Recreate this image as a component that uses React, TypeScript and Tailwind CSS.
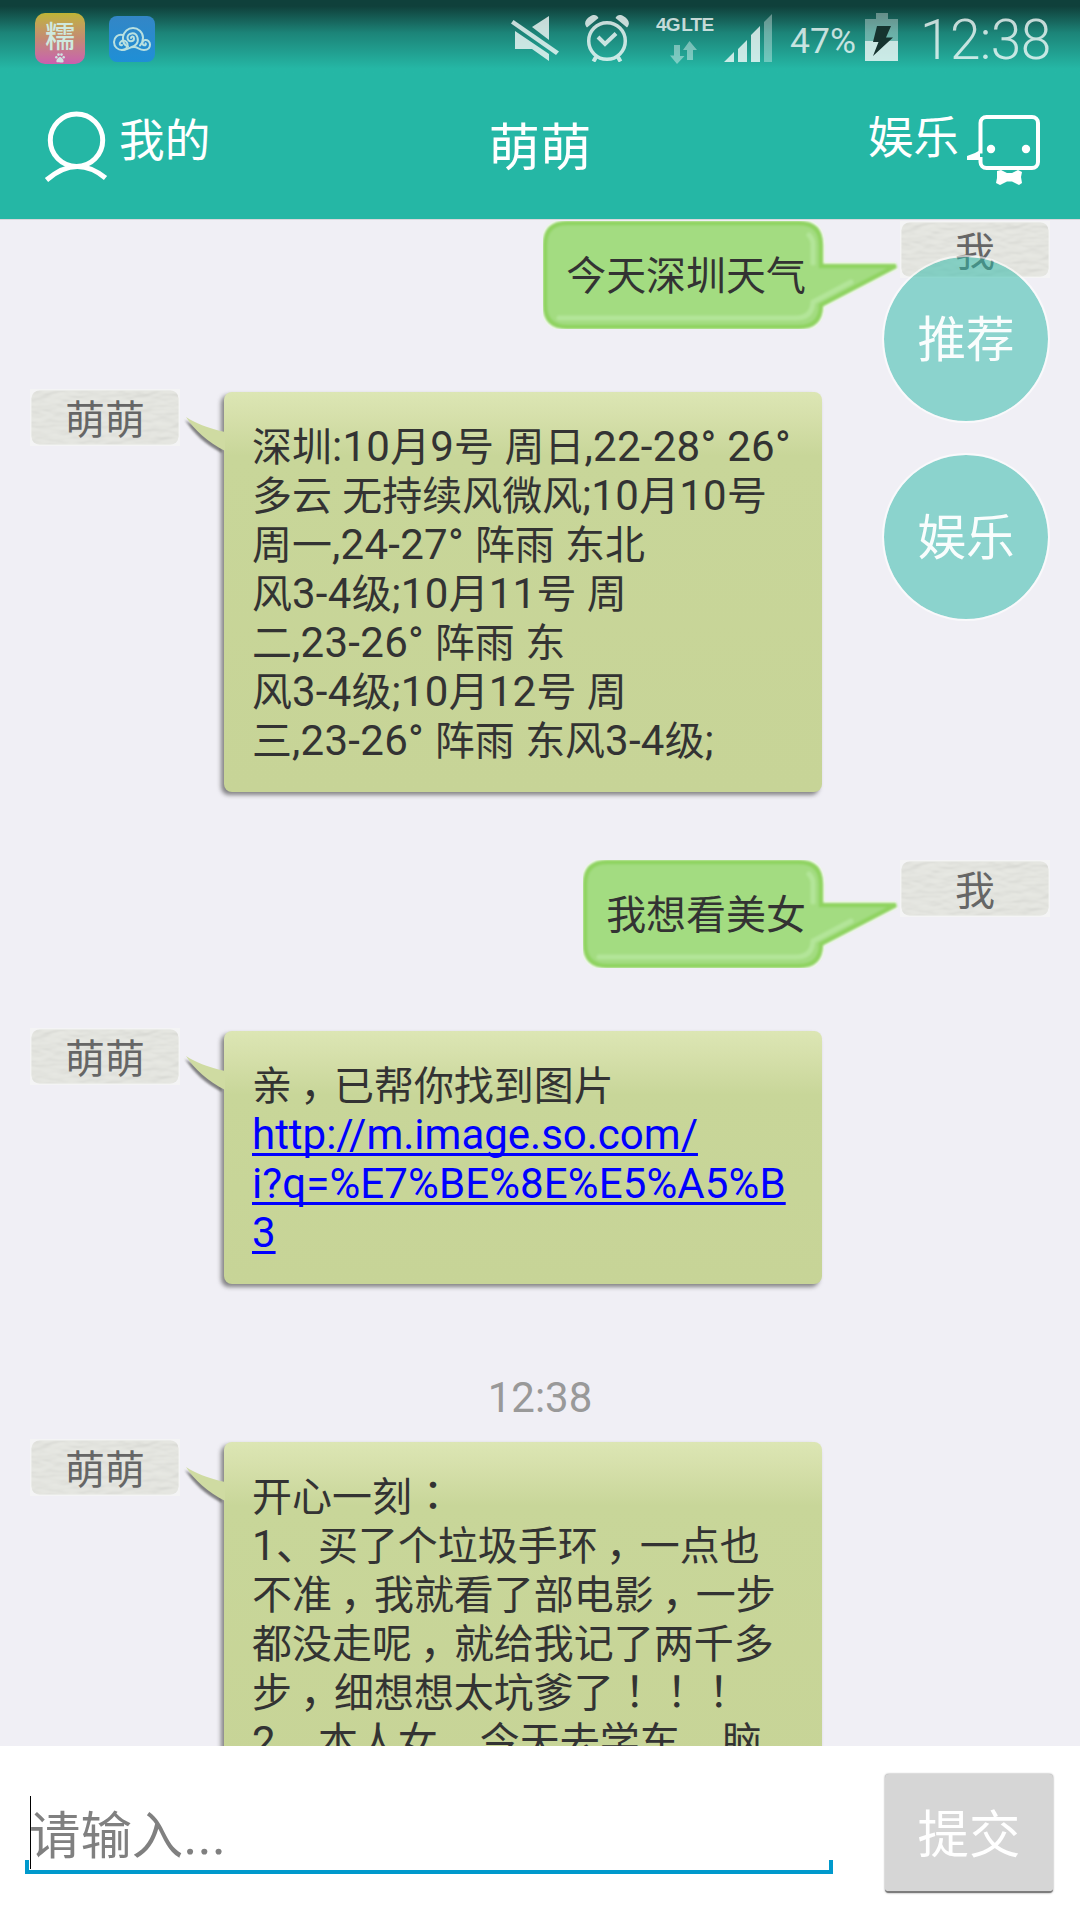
import type { ReactNode } from "react";

interface Message {
  from: "me" | "bot";
  lines: { text: string; link?: boolean }[];
  time?: string;
}

const MESSAGES: Message[] = [
  { from: "me", lines: [{ text: "今天深圳天气" }] },
  {
    from: "bot",
    lines: [
      { text: "深圳:10月9号 周日,22-28° 26°" },
      { text: "多云 无持续风微风;10月10号" },
      { text: "周一,24-27° 阵雨 东北" },
      { text: "风3-4级;10月11号 周" },
      { text: "二,23-26° 阵雨 东" },
      { text: "风3-4级;10月12号 周" },
      { text: "三,23-26° 阵雨 东风3-4级;" },
    ],
  },
  { from: "me", lines: [{ text: "我想看美女" }] },
  {
    from: "bot",
    lines: [
      { text: "亲，已帮你找到图片" },
      { text: "http://m.image.so.com/", link: true },
      { text: "i?q=%E7%BE%8E%E5%A5%B", link: true },
      { text: "3", link: true },
    ],
  },
  {
    from: "bot",
    time: "12:38",
    lines: [
      { text: "开心一刻：" },
      { text: "1、买了个垃圾手环，一点也" },
      { text: "不准，我就看了部电影，一步" },
      { text: "都没走呢，就给我记了两千多" },
      { text: "步，细想想太坑爹了！！！" },
      { text: "2、本人女，今天去学车，脑" },
    ],
  },
];

// Han glyphs are set a little smaller than the Latin ones, full-width marks keep the full em
function Txt({ children }: { children: string }) {
  const parts = children.match(/[\u4e00-\u9fff]+|，|[、：！]|[^\u4e00-\u9fff，、：！]+/g) ?? [];
  return (
    <>
      {parts.map((p, i) => {
        if (/[\u4e00-\u9fff]/.test(p)) {
          return <span key={i} className="text-[0.952em] leading-none">{p}</span>;
        }
        if (p === "，") {
          return (
            <span key={i} className="pl-[0.19em] pr-[0.31em] font-['Roboto','Noto_Sans_CJK_JP',sans-serif] leading-none [font-feature-settings:'halt']">
              {p}
            </span>
          );
        }
        if (/[、：！]/.test(p)) {
          return <span key={i} className="font-['Roboto','Noto_Sans_CJK_JP',sans-serif] leading-none">{p}</span>;
        }
        return <span key={i} className={/\d/.test(p) ? "tracking-[0.3px]" : ""}>{p}</span>;
      })}
    </>
  );
}

function StatusBar() {
  return (
    <div className="flex h-[78px] bg-linear-to-b from-[#0f403b] from-8% via-[#1c8478] via-42% to-[#25b7a5] to-88% pl-[35px]">
      <div className="mt-[13px] flex h-[51px] w-[50px] flex-col items-center rounded-[10px] bg-linear-to-b from-[#bfb433] via-[#c48a72] to-[#c95fae] font-['Noto_Sans_CJK_SC',sans-serif] text-[30px] font-medium leading-[42px] text-[#cfe9df]">
        糯
        <svg className="-mt-[2px] h-[10px] w-[10px]" viewBox="0 0 10 10" fill="#cfe3e2">
          <circle cx="1.3" cy="4.2" r="1.2" />
          <circle cx="3.5" cy="1.6" r="1.3" />
          <circle cx="6.5" cy="1.6" r="1.3" />
          <circle cx="8.7" cy="4.2" r="1.2" />
          <path d="M5 4c1.5 0 3.6 2.500 3.600 4.200S7 9.700 5 9.400 1.400 9.900 1.400 8.200 3.500 4 5 4z" />
        </svg>
      </div>
      <svg className="ml-6 mt-4 h-[46px] w-[46px]" viewBox="109 16 46 46" fill="none">
        <defs>
          <linearGradient id="cloudBg" x1="0" y1="0" x2="0" y2="1">
            <stop offset="0" stopColor="#3386c6" />
            <stop offset="1" stopColor="#1f8fd6" />
          </linearGradient>
        </defs>
        <rect x="109" y="16" width="46" height="46" rx="8" fill="url(#cloudBg)" />
        <g stroke="#b9e0e0" strokeWidth="2" strokeLinecap="round">
          <path d="M131 38c0-2 3-2 3 .5 0 3.500-6 4-6.500-.5-.4-5 8-7 10-.5 1.500 5-2 9-6 9.500" />
          <path d="M128 46.500c-4-1.500-5.500-5.500-5-9.500.8-5.500 5-9 10-9s10 4 10 9.500c0 3.500-1 6-3 8" />
          <path d="M123 35c-5-1.500-9 2.500-9 7 0 5 4 8 8 8s6-3 5.500-6-4-4.500-6.500-2.500-1 4.500 1 3.500" />
          <path d="M122 50c5 0 7-3 12-3 4 0 5 3 10 3 4 0 6-2.500 6-5.500s-2.500-5-5-4.500-3.500 4-1.500 5 3-1 2-1.700" />
        </g>
      </svg>

      <svg className="ml-[356px] mt-[15px] h-[48px] w-[48px]" viewBox="511 15 48 48" fill="#fff" fillOpacity=".76">
        <path d="M532 27L549 16V40Z" />
        <path d="M515 31L549 54V61L532 49H515Z" />
        <path d="M513.500 20L559 51.500 556 55 511 23.500Z" />
      </svg>
      <svg className="ml-[25px] mt-[14px] h-[48px] w-[46px]" viewBox="584 14 46 48" fill="none" stroke="#fff" opacity=".76">
        <circle cx="607" cy="41" r="18.300" strokeWidth="3.500" />
        <path d="M598 37l7 7 11-10.500" strokeWidth="4" />
        <path d="M596 57l-2.500 4.500M618 57l2.500 4.500" strokeWidth="4" />
        <path d="M587 27.500C583 23 586 19 590 16.500S597 15 598.500 18ZM627 27.500C631 23 628 19 624 16.500S617 15 615.500 18Z" fill="#fff" stroke="none" />
      </svg>
      <div className="ml-[26px] mt-[14px] flex w-[59px] flex-col font-['Liberation_Sans',sans-serif] text-[19px] font-bold leading-[22px] tracking-[-0.8px] text-white/75">
        <span className="whitespace-nowrap [word-spacing:-3px]">4G LTE</span>
        <svg className="ml-[14px] mt-[4px] h-[24px] w-[28px]" viewBox="670 40 28 24" fill="#fff" fillOpacity=".4">
          <path d="M674 45h6v11h4.500L677 64 670 55.500h4ZM687 60h6V50h4L689.500 41 683 50h4Z" />
        </svg>
      </div>
      <svg className="ml-[9px] mt-[13px] h-[50px] w-[48px]" viewBox="724 13 48 50" fill="#fff" fillOpacity=".76">
        <path d="M724 62L734 52V62ZM738 62V49L747 40V62ZM751 62V35L760 26V62Z" />
        <path d="M764 62V22L772 14V62Z" fillOpacity=".35" />
      </svg>
      <span className="ml-[18px] mt-[19px] w-[75px] whitespace-nowrap font-['Roboto',sans-serif] text-[35.5px] leading-[44px] text-white/75">47%</span>
      <svg className="mt-[13px] h-[48px] w-[33px]" viewBox="865 13 33 48" fill="#fff">
        <path d="M865 19H876V13H888V19H898V41H865Z" fillOpacity=".35" />
        <path d="M865 41H898V61H865Z" fillOpacity=".76" />
        <path d="M877 26H891L886 37.500H893L873 56 878.500 42H873Z" fill="#16332f" />
      </svg>
      <span className="ml-[22px] mt-[8px] whitespace-nowrap font-['Roboto',sans-serif] text-[55px] font-light leading-[64px] tracking-[-0.6px] text-white/75">12:38</span>
    </div>
  );
}

function NavBar() {
  return (
    <div className="flex h-[141px] justify-between bg-[#25b7a5] text-white">
      <div className="flex w-[360px] pl-[44px]">
        <svg className="mt-[33px] h-[72px] w-[64px]" viewBox="44.500 111 64 72" fill="none" stroke="#fff" strokeWidth="5">
          <circle cx="77" cy="140.200" r="26.200" />
          <path d="M47 180Q77 154 106 178" />
        </svg>
        <span className="ml-[11px] mt-[35px] text-[48px] leading-[56px]"><Txt>我的</Txt></span>
      </div>
      <h1 className="mt-[38px] w-[360px] text-center text-[54px] leading-[64px]"><Txt>萌萌</Txt></h1>
      <div className="flex w-[360px] justify-end pr-[39px]">
        <span className="mt-[32px] text-[48px] leading-[56px]"><Txt>娱乐</Txt></span>
        <svg className="ml-[6px] mt-[35px] h-[74px] w-[76px]" viewBox="965 113 76 74" fill="#fff">
          <rect x="980.500" y="117" width="57.500" height="51" rx="6" fill="none" stroke="#fff" strokeWidth="4" />
          <circle cx="991" cy="149" r="4.200" />
          <circle cx="1026" cy="149" r="4.200" />
          <path d="M982 149L975 153 967 156V160H982Z" />
          <path d="M980 153.500H984V157H980Z" fill="#25b7a5" />
          <path d="M997 171L1001 170 1007 173H1012L1018 170 1022 172 1021 177 1022 183 1019 185 1012 181.500H1007L1000 185 996 183 997 178Z" />
        </svg>
      </div>
    </div>
  );
}

function NameTag({ children }: { children: string }) {
  return (
    <div className="relative h-[57px] w-[150px] shrink-0 bg-[#f4f4f5] pt-[6px] text-center text-[42px] leading-[49px] text-[#666]">
      <svg className="absolute inset-0" width="150" height="57">
        <rect x="1.500" y="1.500" width="147" height="54" rx="8" fill="#e2e3de" />
        <rect x="1.500" y="1.500" width="147" height="54" rx="8" filter="url(#paper)" opacity=".3" />
      </svg>
      <span className="relative"><Txt>{children}</Txt></span>
    </div>
  );
}

function MyBubble({ children, width }: { children: ReactNode; width: number }) {
  const w = width;
  const shape = `M24 2H${w - 24}Q${w - 2} 2 ${w - 2} 24V45H${w + 73}L${w - 2} 84Q${w - 2} 106 ${w - 24} 106H24Q2 106 2 84V24Q2 2 24 2Z`;
  return (
    <div className="relative h-[108px] pl-6 pr-4 pt-[30px] text-[#333]">
      <svg className="absolute left-0 top-0" width={w + 78} height="108">
        <path d={shape} fill="none" stroke="#f7f9f6" strokeWidth="8" />
        <path d={shape} fill="#a3dc81" stroke="#8fd361" strokeWidth="4.500" filter="url(#soft)" />
        <path
          d={`M16 97H${w - 27}Q${w - 11} 97 ${w - 10} 81L${w + 28} 61M${w - 10} 42V24Q${w - 10} 18 ${w - 14} 14`}
          fill="none"
          stroke="#b3e599"
          strokeWidth="5"
          strokeLinecap="round"
          filter="url(#soft)"
        />
      </svg>
      <div className="relative -left-px">{children}</div>
    </div>
  );
}

function BotBubble({ children }: { children: ReactNode }) {
  return (
    <div className="relative ml-[44px] mt-[3px] w-[598px] rounded-[8px] bg-[#c8d699] bg-[linear-gradient(#dce6b4,#d6e0ab_24px,#c8d699_64px,#c7d497)] px-7 pb-[27px] pt-[30px] text-[#333] shadow-[-3px_3px_4px_rgba(60,60,60,0.6)]">
      <svg className="absolute -left-[43px] top-[18px]" width="50" height="48">
        <path d="M5 7C14 13 26 18 42 21.500V40C26 32 13 20 5 7Z" fill="#444" opacity=".65" transform="translate(-1 3)" filter="url(#soft)" />
        <path d="M5 7C14 13 26 18 44 22V41C27 32 13 20 5 7Z" fill="#cfdba2" />
      </svg>
      {children}
    </div>
  );
}

function MessageRow({ message }: { message: Message }) {
  const body = message.lines.map((l, i) => (
    <div key={i} className="h-[49px] whitespace-pre text-[42px] leading-[49px]">
      {l.link ? (
        <a
          className={`text-[#0000ff] underline decoration-[2.5px] underline-offset-[4px] [text-decoration-skip-ink:none] ${
            l.text.includes("%") ? "tracking-[0.12px]" : ""
          }`}
        >
          {l.text}
        </a>
      ) : (
        <Txt>{l.text}</Txt>
      )}
    </div>
  ));

  if (message.from === "me") {
    return (
      <div className="mb-[60px] flex justify-end pr-[30px]">
        <MyBubble width={message.lines[0].text.length * 40 + 40}>{body}</MyBubble>
        <div className="ml-[77px]"><NameTag>我</NameTag></div>
      </div>
    );
  }
  return (
    <>
      {message.time && (
        <p className="mb-[17px] pt-[21px] text-center text-[42px] leading-[49px] text-[#999]">{message.time}</p>
      )}
      <div className="mb-[68px] flex items-start pl-[30px]">
        <NameTag>萌萌</NameTag>
        <BotBubble>{body}</BotBubble>
      </div>
    </>
  );
}

function QuickButtons() {
  return (
    <div className="absolute right-[30px] top-[35px] flex flex-col gap-[30px]">
      {["推荐", "娱乐"].map(label => (
        <button
          key={label}
          className="h-[168px] w-[168px] rounded-full border-2 border-white/60 bg-[#25b7a5]/50 bg-clip-padding pt-[2px] text-[51px] leading-[60px] text-white/95"
        >
          <Txt>{label}</Txt>
        </button>
      ))}
    </div>
  );
}

function InputBar() {
  return (
    <div className="flex h-[174px] justify-between bg-white pl-[25px] pr-[27px]">
      <div className="mt-[50px] flex h-[78px] w-[808px] flex-col">
        <div className="flex h-[64px] pl-[5px] text-[54px] leading-[64px] text-[#808080]">
          <span className="h-[73px] w-px shrink-0 bg-black" />
          <span className="-ml-[2px] mt-[8px]"><Txt>请输入...</Txt></span>
        </div>
        <div className="h-[14px] border-x-4 border-b-4 border-[#0099cc]" />
      </div>
      <button className="mt-[28px] h-[119px] w-[168px] rounded-[4px] border-b-2 border-[#7d7d7d] bg-[#d6d6d6] pt-[4px] text-[54px] leading-[64px] text-white shadow-[0_0_2px_rgba(0,0,0,0.5)]">
        <Txt>提交</Txt>
      </button>
    </div>
  );
}

export default function App() {
  return (
    <div className="flex h-[1920px] w-[1080px] flex-col overflow-hidden bg-[#f0eff5] font-['Roboto','Noto_Sans_CJK_SC',sans-serif]">
      <svg className="absolute h-0 w-0">
        <filter id="soft"><feGaussianBlur stdDeviation="1.100" /></filter>
        <filter id="paper" x="0" y="0" width="1" height="1">
          <feTurbulence type="fractalNoise" baseFrequency="0.06 0.14" numOctaves="2" seed="4" result="noise" />
          <feDiffuseLighting in="noise" surfaceScale="1.400" lightingColor="#f6f7f1" result="light">
            <feDistantLight azimuth="80" elevation="60" />
          </feDiffuseLighting>
          <feComposite in="light" in2="SourceGraphic" operator="in" />
        </filter>
      </svg>
      <StatusBar />
      <NavBar />
      <div className="relative h-[1527px] overflow-hidden border-t border-[#d8d8dc] pt-px">
        {MESSAGES.map((m, i) => (
          <MessageRow key={i} message={m} />
        ))}
        <QuickButtons />
      </div>
      <InputBar />
    </div>
  );
}
